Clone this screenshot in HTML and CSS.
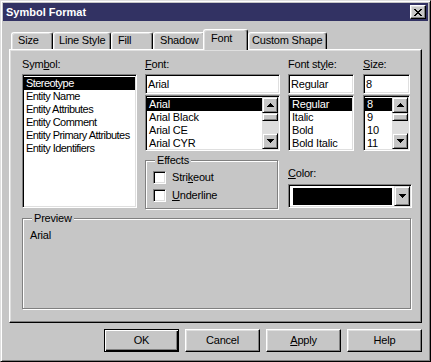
FILE: index.html
```html
<!DOCTYPE html>
<html lang="en">
<head>
    <meta charset="UTF-8">
    <title>Symbol Format</title>
    <link rel="stylesheet" href="styles.css">
</head>
<body>
    <div class="window">
        <div class="titlebar">
            <span class="title">Symbol Format</span>
            <div class="close">
                <svg width="8" height="7" viewBox="0 0 8 7" shape-rendering="crispEdges"><path d="M0 0h2v1H0z M6 0h2v1H6z M1 1h2v1H1z M5 1h2v1H5z M2 2h4v1H2z M3 3h2v1H3z M2 4h4v1H2z M1 5h2v1H1z M5 5h2v1H5z M0 6h2v1H0z M6 6h2v1H6z"/></svg>
            </div>
        </div>

        <!-- tab strip -->
        <div class="tabs">
            <div class="tab tab-size">Size</div>
            <div class="tab tab-line">Line Style</div>
            <div class="tab tab-fill">Fill</div>
            <div class="tab tab-shadow">Shadow</div>
            <div class="tab tab-font active">Font</div>
            <div class="tab tab-custom">Custom Shape</div>
        </div>

        <div class="panel">
            <div class="fields">
                <div class="col col-symbol">
                    <div class="label">Sym<u>b</u>ol:</div>
                    <ul class="listbox sunken symbol-list">
                        <li class="selected">Stereotype</li>
                        <li>Entity Name</li>
                        <li>Entity Attributes</li>
                        <li>Entity Comment</li>
                        <li>Entity Primary Attributes</li>
                        <li>Entity Identifiers</li>
                    </ul>
                </div>

                <div class="col col-font">
                    <div class="label"><u>F</u>ont:</div>
                    <div class="textbox sunken">Arial</div>
                    <div class="listbox sunken scrolling">
                        <ul>
                            <li class="selected">Arial</li>
                            <li>Arial Black</li>
                            <li>Arial CE</li>
                            <li>Arial CYR</li>
                        </ul>
                        <div class="scrollbar">
                            <div class="sb-btn raised">
                                <svg width="7" height="4" viewBox="0 0 7 4" shape-rendering="crispEdges"><path d="M3 0h1v1h1v1h1v1h1v1H0V3h1V2h1V1h1z"/></svg>
                            </div>
                            <div class="sb-thumb raised"></div>
                            <div class="sb-track"></div>
                            <div class="sb-btn raised">
                                <svg width="7" height="4" viewBox="0 0 7 4" shape-rendering="crispEdges"><path d="M0 0h7v1H6v1H5v1H4v1H3V3H2V2H1V1H0z"/></svg>
                            </div>
                        </div>
                    </div>
                    <div class="group effects">
                        <span class="legend">Effects</span>
                        <div class="check"><span class="box sunken"></span>Stri<u>k</u>eout</div>
                        <div class="check"><span class="box sunken"></span><u>U</u>nderline</div>
                    </div>
                </div>

                <div class="col col-right">
                    <div class="pair">
                        <div class="col col-style">
                            <div class="label">Font st<u>y</u>le:</div>
                            <div class="textbox sunken">Regular</div>
                            <ul class="listbox sunken style-list">
                                <li class="selected">Regular</li>
                                <li>Italic</li>
                                <li>Bold</li>
                                <li>Bold Italic</li>
                            </ul>
                        </div>
                        <div class="col col-size">
                            <div class="label"><u>S</u>ize:</div>
                            <div class="textbox sunken">8</div>
                            <div class="listbox sunken scrolling">
                                <ul>
                                    <li class="selected">8</li>
                                    <li>9</li>
                                    <li>10</li>
                                    <li>11</li>
                                </ul>
                                <div class="scrollbar">
                                    <div class="sb-btn raised">
                                        <svg width="7" height="4" viewBox="0 0 7 4" shape-rendering="crispEdges"><path d="M3 0h1v1h1v1h1v1h1v1H0V3h1V2h1V1h1z"/></svg>
                                    </div>
                                    <div class="sb-thumb raised"></div>
                                    <div class="sb-track"></div>
                                    <div class="sb-btn raised">
                                        <svg width="7" height="4" viewBox="0 0 7 4" shape-rendering="crispEdges"><path d="M0 0h7v1H6v1H5v1H4v1H3V3H2V2H1V1H0z"/></svg>
                                    </div>
                                </div>
                            </div>
                        </div>
                    </div>
                    <div class="label color-label"><u>C</u>olor:</div>
                    <div class="combo sunken">
                        <div class="swatch"></div>
                        <div class="drop raised">
                            <svg width="7" height="4" viewBox="0 0 7 4" shape-rendering="crispEdges"><path d="M0 0h7v1H6v1H5v1H4v1H3V3H2V2H1V1H0z"/></svg>
                        </div>
                    </div>
                </div>
            </div>

            <div class="group preview">
                <span class="legend">Preview</span>
                <div class="preview-text">Arial</div>
            </div>
        </div>

        <div class="buttons">
            <div class="button default">OK</div>
            <div class="button">Cancel</div>
            <div class="button"><u>A</u>pply</div>
            <div class="button">Help</div>
        </div>
    </div>
</body>
</html>
```

FILE: styles.css
```css
* {
    margin: 0;
    padding: 0;
    box-sizing: border-box;
}

body {
    background: #c6c6c6;
    font-family: "Liberation Sans", Arial, sans-serif;
    font-size: 11px;
    line-height: 13px;
    letter-spacing: -0.2px;
    color: #000;
}

ul {
    list-style: none;
}

/* bevels */
.raised {
    background: #c6c6c6;
    border: 1px solid;
    border-color: #dfdfdf #000 #000 #dfdfdf;
    box-shadow: inset 1px 1px #fff, inset -1px -1px #808080;
}

.sunken {
    background: #fff;
    border: 1px solid;
    border-color: #808080 #fff #fff #808080;
    box-shadow: inset 1px 1px #000, inset -1px -1px #dfdfdf;
    padding: 1px;
}

.window {
    width: 431px;
    height: 362px;
    padding: 2px;
    background: #c6c6c6;
    border: 1px solid;
    border-color: #dfdfdf #000 #000 #dfdfdf;
    box-shadow: inset 1px 1px #fff, inset -1px -1px #808080;
}

.titlebar {
    display: flex;
    align-items: center;
    justify-content: space-between;
    height: 18px;
    padding: 0 2px 0 3px;
    background: #323263;
    color: #fff;
}

.title {
    font-weight: bold;
    letter-spacing: 0;
}

.close {
    display: flex;
    align-items: center;
    justify-content: center;
    width: 16px;
    height: 14px;
    background: #c6c6c6;
    border: 1px solid;
    border-color: #fff #000 #000 #fff;
    box-shadow: inset -1px -1px #808080, inset 1px 1px #dfdfdf;
}

/* tabs */
.tabs {
    display: flex;
    align-items: flex-end;
    height: 28px;
    padding-left: 8px;
}

.tab {
    height: 17px;
    padding: 1px 0 0 6px;
    white-space: nowrap;
    overflow: hidden;
    border: 1px solid;
    border-bottom: 0;
    border-color: #fff #000 #000 #fff;
    border-radius: 3px 3px 0 0;
    box-shadow: inset -1px 0 #808080, inset 1px 1px #dfdfdf;
}

.tab-size { width: 42px; }
.tab-line { width: 58px; padding-left: 5px; }
.tab-fill { width: 42px; }
.tab-shadow { width: 52px; }
.tab-custom { width: 79px; padding-left: 3px; }

.tab.active {
    position: relative;
    z-index: 1;
    width: 45px;
    height: 21px;
    margin-left: -2px;
    margin-bottom: -1px;
    padding: 2px 0 0 7px;
    background: #c6c6c6;
}

.panel {
    width: 413px;
    height: 274px;
    margin-left: 6px;
    padding: 8px 9px 0 12px;
    border: 1px solid;
    border-color: #fff #000 #000 #fff;
    box-shadow: inset -1px -1px #808080, inset 1px 1px #dfdfdf;
}

.fields {
    display: flex;
    gap: 8px;
    height: 150px;
}

.label {
    height: 16px;
}

.col-symbol { width: 115px; }
.col-font { width: 135px; }
.col-right { width: 124px; }
.col-style { width: 66px; }
.col-size { width: 47px; }

.pair {
    display: flex;
    gap: 9px;
}

.textbox {
    height: 20px;
    padding: 1px 2px;
    line-height: 16px;
    white-space: nowrap;
    overflow: hidden;
}

.listbox {
    overflow: hidden;
    white-space: nowrap;
}

.listbox li {
    height: 13px;
    padding-left: 2px;
}

.listbox li.selected {
    background: #000;
    color: #fff;
}

.symbol-list {
    height: 134px;
    padding-top: 2px;
    letter-spacing: -0.55px;
}

.style-list,
.scrolling {
    height: 56px;
    margin-top: 1px;
}

.scrolling {
    display: flex;
}

.scrolling ul {
    flex: 1;
    overflow: hidden;
    padding-top: 1px;
}

.style-list {
    padding-top: 2px;
}

.scrollbar {
    display: flex;
    flex-direction: column;
    width: 16px;
    background: #dedede;
}

.sb-btn {
    display: flex;
    align-items: center;
    justify-content: center;
    height: 16px;
}

.sb-thumb {
    height: 8px;
}

.sb-track {
    flex: 1;
}

/* group boxes */
.group {
    position: relative;
    border: 1px solid #808080;
    box-shadow: 1px 1px #fff, inset 1px 1px #fff;
}

.legend {
    position: absolute;
    top: -7px;
    left: 9px;
    padding: 0 2px;
    background: #c6c6c6;
}

.effects {
    width: 133px;
    height: 49px;
    margin-top: 9px;
    padding: 10px 0 0 7px;
}

.check {
    display: flex;
    align-items: center;
    height: 13px;
    margin-bottom: 5px;
}

.check .box {
    width: 13px;
    height: 13px;
    margin-right: 6px;
}

.color-label {
    height: 17px;
    margin-top: 16px;
}

.combo {
    display: flex;
    width: 124px;
    height: 24px;
}

.swatch {
    flex: 1;
    margin: 2px 2px 1px 3px;
    background: #000;
}

.drop {
    display: flex;
    align-items: center;
    justify-content: center;
    width: 16px;
}

.preview {
    width: 389px;
    height: 91px;
    margin-top: 10px;
    padding: 10px 0 0 7px;
}

/* dialog buttons */
.buttons {
    display: flex;
    justify-content: flex-end;
    gap: 6px;
    width: 413px;
    margin: 6px 0 0 6px;
}

.button {
    display: flex;
    align-items: center;
    justify-content: center;
    width: 75px;
    height: 23px;
    background: #c6c6c6;
    border: 1px solid;
    border-color: #fff #000 #000 #fff;
    box-shadow: inset -1px -1px #808080, inset 1px 1px #dfdfdf;
}

.button.default {
    border-color: #000;
    box-shadow: inset 1px 1px #fff, inset -1px -1px #000, inset -2px -2px #808080;
}
```
